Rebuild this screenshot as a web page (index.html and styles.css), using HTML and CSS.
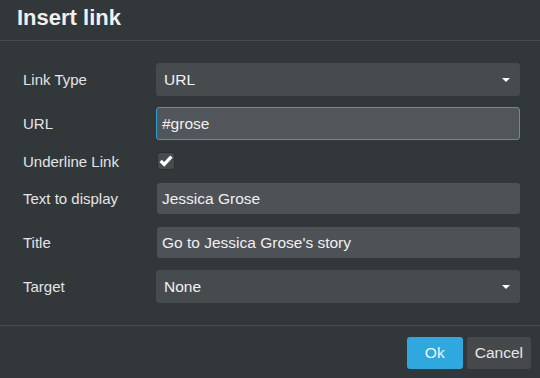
FILE: index.html
```html
<!DOCTYPE html>
<html>
<head>
<meta charset="utf-8">
<link rel="stylesheet" href="styles.css">
</head>
<body>
<div class="dialog">
  <div class="header"><h1 class="title">Insert link</h1></div>
  <div class="body">
    <div class="row">
      <label class="label">Link Type</label>
      <div class="select"><span>URL</span><span class="caret"></span></div>
    </div>
    <div class="row">
      <label class="label">URL</label>
      <div class="input focused">#grose</div>
    </div>
    <div class="row row-check">
      <label class="label">Underline Link</label>
      <div class="checkbox">
        <svg width="18" height="18" viewBox="0 0 18 18"><path d="M3.6 8.9 L7.2 12.3 L14.4 4.6" fill="none" stroke="#ffffff" stroke-width="3.3" stroke-linejoin="miter"/></svg>
      </div>
    </div>
    <div class="row">
      <label class="label">Text to display</label>
      <div class="input">Jessica Grose</div>
    </div>
    <div class="row">
      <label class="label">Title</label>
      <div class="input">Go to Jessica Grose's story</div>
    </div>
    <div class="row">
      <label class="label">Target</label>
      <div class="select"><span>None</span><span class="caret"></span></div>
    </div>
  </div>
  <div class="footer">
    <button class="btn btn-primary">Ok</button>
    <button class="btn">Cancel</button>
  </div>
</div>
</body>
</html>
```
FILE: styles.css
```css
html, body {
  margin: 0;
  padding: 0;
  background: #32373a;
}
.dialog {
  width: 540px;
  height: 378px;
  background: #32373a;
  font-family: "Liberation Sans", Arial, sans-serif;
  color: #e6e6e6;
  box-sizing: border-box;
}
.header {
  height: 40px;
  border-bottom: 1px solid #474c4f;
  padding-left: 17px;
  display: flex;
  align-items: center;
}
.title {
  margin: 0;
  font-size: 22px;
  font-weight: bold;
  color: #f0f0f0;
  line-height: 1;
  position: relative;
  top: -2px;
}
.body {
  padding: 16.5px 20px 16.5px 23px;
  display: flex;
  flex-direction: column;
}
.row {
  height: 44px;
  display: flex;
  align-items: center;
}
.row-check {
  height: 31px;
}
.label {
  width: 133px;
  flex: none;
  font-size: 15px;
  color: #e4e4e4;
}
.select {
  flex: 1;
  height: 33px;
  background: #464b4e;
  border-radius: 3px;
  box-sizing: border-box;
  padding: 0 10px 0 8px;
  display: flex;
  align-items: center;
  justify-content: space-between;
  font-size: 15.5px;
  color: #f2f2f2;
}
.caret {
  width: 0;
  height: 0;
  border-left: 4px solid transparent;
  border-right: 4px solid transparent;
  border-top: 4px solid #ffffff;
  margin-top: 1px;
}
.input {
  flex: 1;
  height: 31px;
  margin-left: 1px;
  background: #4d5256;
  border-radius: 3px;
  box-sizing: border-box;
  padding: 0 5px;
  display: flex;
  align-items: center;
  font-size: 15.5px;
  color: #f0f0f0;
}
.input.focused {
  height: 33px;
  margin-left: 0;
  background: #50565a;
  border: 1px solid #2d9fd3;
}
.checkbox {
  width: 18px;
  height: 18px;
  margin-left: 1px;
  box-sizing: border-box;
  background: #464b4e;
  border: 1px solid #2b2f31;
  border-radius: 3px;
  display: flex;
  align-items: center;
  justify-content: center;
}
.checkbox svg {
  display: block;
  flex: none;
}
.footer {
  border-top: 1px solid #474c4f;
  display: flex;
  justify-content: flex-end;
  gap: 4px;
  padding: 11px 9px 0 0;
}
.btn {
  height: 32px;
  min-width: 64px;
  padding: 0 8px;
  border: none;
  border-radius: 3px;
  background: #45494c;
  color: #e6e6e6;
  font-family: "Liberation Sans", Arial, sans-serif;
  font-size: 15.5px;
  cursor: pointer;
}
.btn-primary {
  min-width: 56px;
  width: 56px;
  background: #2ea8df;
  color: #eef7fc;
}
```
